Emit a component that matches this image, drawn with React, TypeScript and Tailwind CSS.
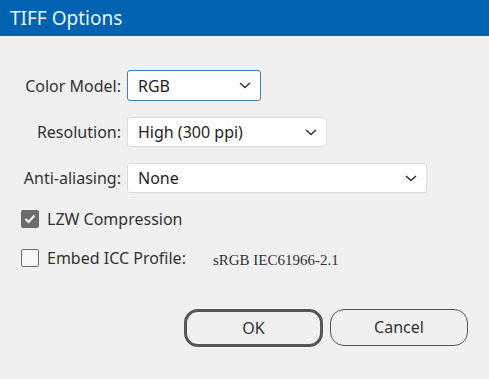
import React from 'react';

const font = { fontFamily: '"Noto Sans", "Open Sans", sans-serif' };

const Chevron: React.FC = () => (
  <svg width="12" height="7" viewBox="0 0 12 7" className="shrink-0">
    <path d="M1 1 L6 5.5 L11 1" fill="none" stroke="#333" strokeWidth="1.6" />
  </svg>
);

interface SelectProps {
  value: string;
  width: string;
  focused?: boolean;
}

const Select: React.FC<SelectProps> = ({ value, width, focused }) => (
  <div
    className={`${width} h-[30px] flex items-center justify-between pl-[10px] pr-[9px] rounded-[3px] bg-white border ${
      focused ? 'border-[#3d7ac7] border-[1.5px] h-[31px]' : 'border-[#dcdcdc]'
    }`}
  >
    <span className="text-[16px] text-[#1e1e1e] leading-none">{value}</span>
    <Chevron />
  </div>
);

const Row: React.FC<{ label: string; children: React.ReactNode }> = ({ label, children }) => (
  <div className="flex items-center gap-[6px]">
    <div className="w-[121px] text-right text-[16px] text-[#323232]">{label}</div>
    {children}
  </div>
);

export default function App() {
  return (
    <div className="w-[489px] h-[379px] bg-[#f0f0f0] flex flex-col" style={font}>
      <div className="h-[36px] bg-[#0063b1] flex items-center pl-[10px]">
        <span className="text-[19px] text-[#eaf4ff]">TIFF Options</span>
      </div>

      <div className="flex flex-col gap-[16px] pt-[34px]">
        <Row label="Color Model:">
          <Select value="RGB" width="w-[134px]" focused />
        </Row>
        <Row label="Resolution:">
          <Select value="High (300 ppi)" width="w-[200px]" />
        </Row>
        <Row label="Anti-aliasing:">
          <Select value="None" width="w-[300px]" />
        </Row>
      </div>

      <div className="flex flex-col gap-[14px] pl-[21px] pt-[14px]">
        <div className="flex items-center gap-[8px]">
          <div className="w-[18px] h-[18px] rounded-[2px] bg-[#6b6b6b] flex items-center justify-center">
            <svg width="12" height="10" viewBox="0 0 12 10">
              <path d="M1.5 5 L4.5 8 L10.5 1.5" fill="none" stroke="#fff" strokeWidth="2" />
            </svg>
          </div>
          <span className="text-[16px] text-[#323232]">LZW Compression</span>
        </div>
        <div className="flex items-center gap-[8px]">
          <div className="w-[18px] h-[18px] rounded-[2px] border border-[#6b6b6b] bg-[#f7f7f7]" />
          <span className="text-[16px] text-[#323232]">Embed ICC Profile:</span>
          <span
            className="ml-[19px] mt-[4px] text-[15px] text-[#323232]"
            style={{ fontFamily: '"Liberation Serif", serif' }}
          >
            sRGB IEC61966-2.1
          </span>
        </div>
      </div>

      <div className="flex justify-end gap-[7px] pr-[21px] pt-[37px]">
        <button className="w-[139px] h-[38px] rounded-[14px] border-[3px] border-[#555] text-[16px] text-[#323232]">
          OK
        </button>
        <button className="w-[138px] h-[37px] rounded-[14px] border-[1.5px] border-[#555] text-[16px] text-[#323232]">
          Cancel
        </button>
      </div>
    </div>
  );
}
